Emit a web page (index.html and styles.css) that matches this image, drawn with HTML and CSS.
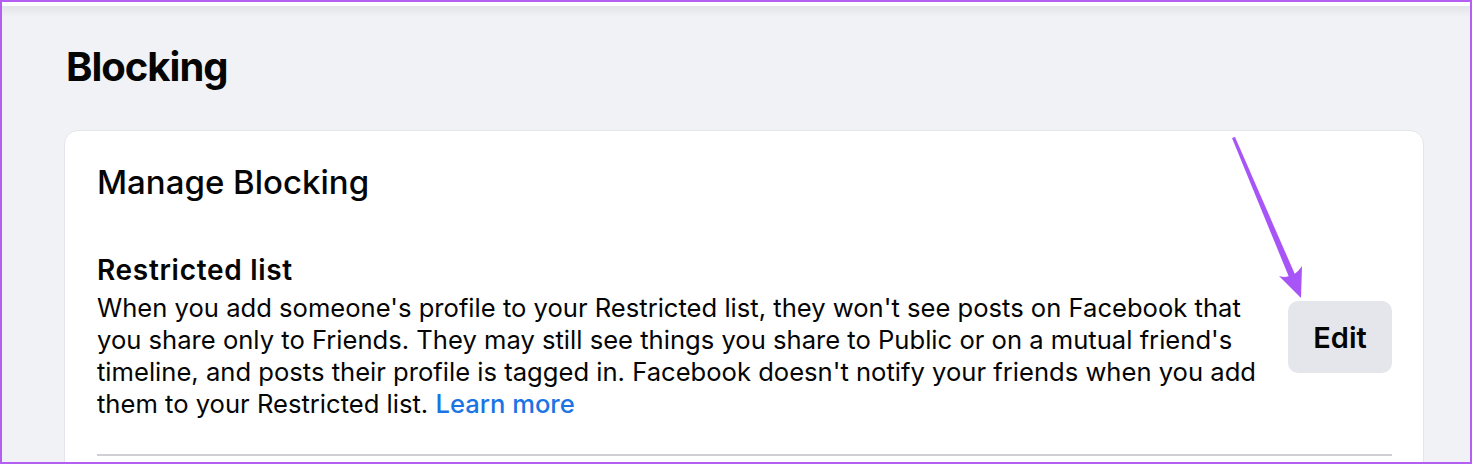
FILE: index.html
```html
<!DOCTYPE html>
<html lang="en">
<head>
  <meta charset="UTF-8" />
  <title>Blocking</title>
  <link rel="stylesheet" href="styles.css">
</head>
<body>
  <div class="frame">
    <div class="top-strip"></div>
    <main class="page">
      <h1>Blocking</h1>
      <section class="card">
        <h2>Manage Blocking</h2>
        <div class="setting-row">
          <div class="setting-text">
            <h3>Restricted list</h3>
            <p>When you add someone's profile to your Restricted list, they won't see posts on Facebook that you share only to Friends. They may still see things you share to Public or on a mutual friend's timeline, and posts their profile is tagged in. Facebook doesn't notify your friends when you add them to your Restricted list. <a href="#">Learn more</a></p>
          </div>
          <button type="button" class="edit-btn">Edit</button>
        </div>
        <div class="divider"></div>
      </section>
    </main>

    <!-- annotation arrow -->
    <svg class="arrow" width="1472" height="464" viewBox="0 0 1472 464">
      <path d="M1232 138 L1235 137 L1297 279 L1291 282 Z" fill="#a855f7" />
      <path d="M1279 276 Q1293 280 1302 266 L1301 298 Z" fill="#a855f7" />
    </svg>
  </div>
</body>
</html>
```

FILE: styles.css
```css
* {
  box-sizing: border-box;
}

body {
  margin: 0;
  font-family: Inter, "Liberation Sans", Arial, sans-serif;
  color: #050505;
}

.frame {
  position: relative;
  width: 1472px;
  height: 464px;
  border: 2px solid #b35ff2;
  overflow: hidden;
  background: #f0f2f5;
}

.top-strip {
  height: 4px;
  background: #fff;
}

.page {
  padding: 36px 46px 0 62px;
  background: linear-gradient(#e3e4e9, #f0f2f5 11px);
}

h1 {
  margin: 0 0 38px 2px;
  font-size: 40px;
  line-height: 50px;
  font-weight: 700;
  letter-spacing: -1px;
}

.card {
  background: #fff;
  border: 1px solid #e4e6eb;
  border-radius: 14px;
  padding: 31px 31px 0 32px;
  height: 400px;
}

h2 {
  margin: 0;
  font-size: 33px;
  line-height: 40px;
  font-weight: 500;
}

.setting-row {
  display: flex;
  align-items: center;
  gap: 20px;
  margin-top: 52px;
}

.setting-text {
  flex: 1;
}

h3 {
  margin: 0;
  font-size: 28px;
  line-height: 32px;
  font-weight: 600;
  letter-spacing: 0.7px;
}

p {
  margin: 6px 0 0;
  font-size: 25.6px;
  line-height: 32px;
}

a {
  color: #1b74e4;
  text-decoration: none;
  font-weight: 500;
}

.edit-btn {
  width: 104px;
  height: 72px;
  border: none;
  border-radius: 10px;
  background: #e4e6eb;
  color: #050505;
  font-family: inherit;
  font-size: 29px;
  font-weight: 600;
}

.divider {
  height: 2px;
  margin-top: 34px;
  background: #ced0d4;
}

.arrow {
  position: absolute;
  left: -2px;
  top: -2px;
}
```
